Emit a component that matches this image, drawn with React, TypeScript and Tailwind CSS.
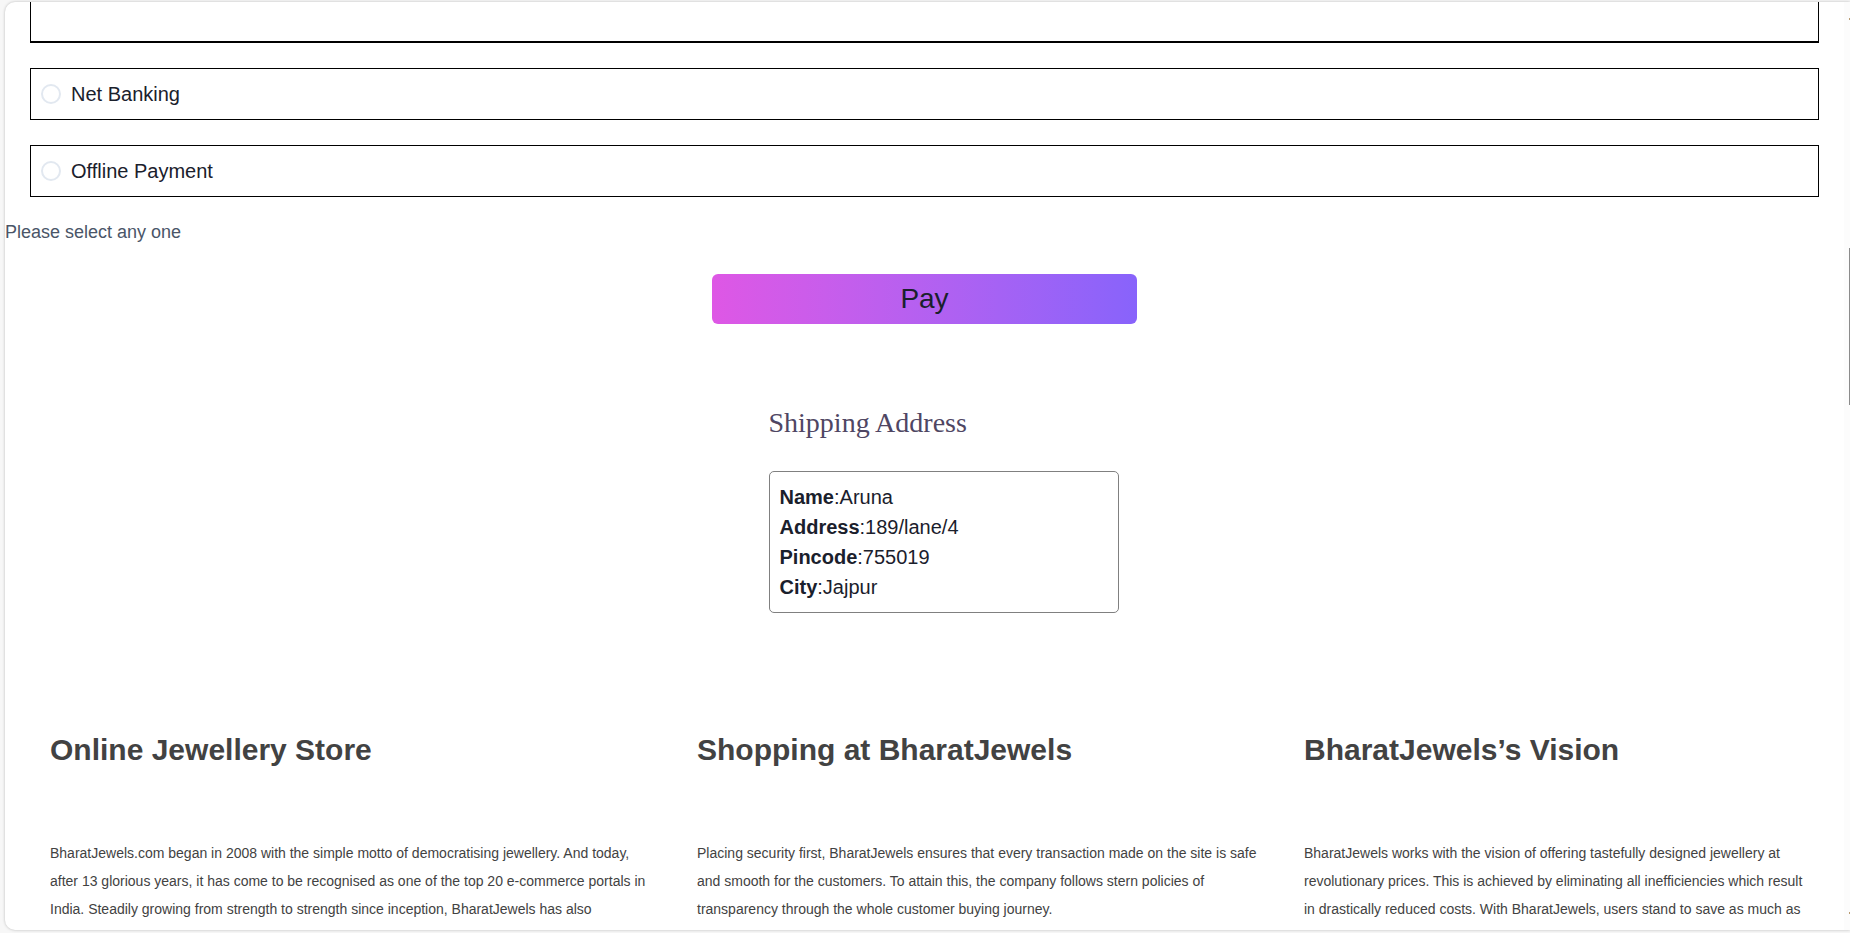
import React from "react";

const paymentMethods = [
  { id: "net-banking", label: "Net Banking" },
  { id: "offline-payment", label: "Offline Payment" },
];

const shippingAddress = [
  { term: "Name", value: "Aruna" },
  { term: "Address", value: "189/lane/4" },
  { term: "Pincode", value: "755019" },
  { term: "City", value: "Jajpur" },
];

const articles = [
  {
    title: "Online Jewellery Store",
    text: "BharatJewels.com began in 2008 with the simple motto of democratising jewellery. And today, after 13 glorious years, it has come to be recognised as one of the top 20 e-commerce portals in India. Steadily growing from strength to strength since inception, BharatJewels has also",
  },
  {
    title: "Shopping at BharatJewels",
    text: "Placing security first, BharatJewels ensures that every transaction made on the site is safe and smooth for the customers. To attain this, the company follows stern policies of transparency through the whole customer buying journey.",
  },
  {
    title: "BharatJewels’s Vision",
    text: "BharatJewels works with the vision of offering tastefully designed jewellery at revolutionary prices. This is achieved by eliminating all inefficiencies which result in drastically reduced costs. With BharatJewels, users stand to save as much as",
  },
];

function PaymentOption({ id, label }: { id: string; label: string }) {
  return (
    <label
      htmlFor={id}
      className="flex h-[52px] items-center gap-2.5 border border-black px-2.5 text-xl text-[#1a202c]"
    >
      <input
        id={id}
        type="radio"
        name="payment"
        className="size-5 appearance-none rounded-full border-2 border-[#e2e8f0] bg-white checked:border-[6px] checked:border-[#3182ce]"
      />
      {label}
    </label>
  );
}

function Scrollbar() {
  return (
    <div aria-hidden="true" className="flex w-1.5 flex-col items-end bg-[#fcfcfc] py-4">
      <div className="h-0.5 w-px bg-[#b89a70]" />
      <div className="mt-[228px] h-[157px] w-px bg-[#8b8b8b]" />
      <div className="mt-auto h-0.5 w-px bg-[#b89a70]" />
    </div>
  );
}

export default function App() {
  return (
    <div className="h-screen overflow-hidden bg-[#f7f7f7] pt-0.5 pb-[3px] pl-[5px] font-['Liberation_Sans',Arial,sans-serif]">
      <div className="flex h-full overflow-hidden rounded-l-[10px] bg-white shadow-[0_0_3px_rgba(0,0,0,0.25)]">
        <main className="min-w-0 flex-1">
          <form onSubmit={(e) => e.preventDefault()}>
            <div className="flex flex-col gap-[25px] px-[25px]">
              <div className="h-[41px] border-x border-b-2 border-black" />
              {paymentMethods.map((method) => (
                <PaymentOption key={method.id} {...method} />
              ))}
            </div>
            <p className="mt-[21px] text-lg leading-7 text-[#4a5568]">Please select any one</p>
            <button
              type="submit"
              className="mx-auto mt-7 block h-[50px] w-[425px] rounded-md bg-linear-to-r from-[#de57e5] to-[#8863fb] text-[28px] leading-[42px] text-[#1a202c]"
            >
              Pay
            </button>
          </form>

          <section className="ml-[calc(50%-156px)] w-[350px] pt-[78px]">
            <h2 className="font-['Liberation_Serif','Times_New_Roman',serif] text-[28px] leading-[42px] text-[#4f4663]">
              Shipping Address
            </h2>
            <dl className="mt-[27px] rounded-[5px] border border-[#808080] p-2.5 text-xl leading-[30px] text-[#1a202c]">
              {shippingAddress.map(({ term, value }) => (
                <div key={term} className="flex">
                  <dt>
                    <b>{term}</b>:
                  </dt>
                  <dd>{value}</dd>
                </div>
              ))}
            </dl>
          </section>

          <div className="mt-[114px] grid grid-cols-[607fr_567fr_507fr] gap-10 pr-[33px] pl-[45px] text-[#424242]">
            {articles.map(({ title, text }) => (
              <article key={title}>
                <h2 className="text-3xl leading-[45px] font-bold">{title}</h2>
                <p className="mt-[67px] text-sm leading-7">{text}</p>
              </article>
            ))}
          </div>
        </main>
        <Scrollbar />
      </div>
    </div>
  );
}
